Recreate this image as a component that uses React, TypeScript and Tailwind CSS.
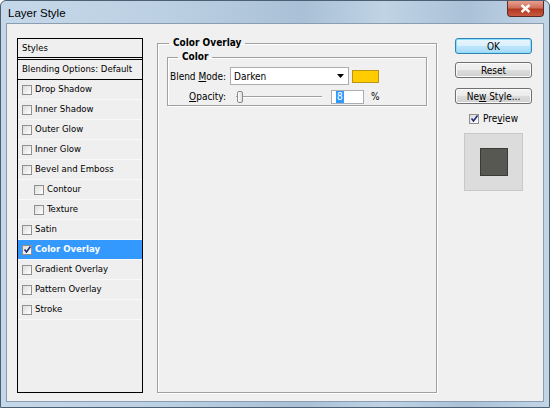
import React from 'react'

const font = { fontFamily: '"DejaVu Sans Condensed", "DejaVu Sans", sans-serif', fontStretch: 'condensed' }

function Check({ checked = false }: { checked?: boolean }) {
  return (
    <span className="relative flex h-[10px] w-[10px] shrink-0 items-center justify-center border border-[#8f8f8f] bg-gradient-to-br from-[#dcdcdc] to-[#ffffff]">
      {checked && (
        <svg width="9" height="9" viewBox="0 0 9 9" className="absolute">
          <path d="M1.5 4.5 L3.5 7 L7.5 1.5" fill="none" stroke="#1e2a78" strokeWidth="1.6" />
        </svg>
      )}
    </span>
  )
}

interface Row {
  label: string
  indent?: boolean
  checked?: boolean
  selected?: boolean
}

const rows: Row[] = [
  { label: 'Drop Shadow' },
  { label: 'Inner Shadow' },
  { label: 'Outer Glow' },
  { label: 'Inner Glow' },
  { label: 'Bevel and Emboss' },
  { label: 'Contour', indent: true },
  { label: 'Texture', indent: true },
  { label: 'Satin' },
  { label: 'Color Overlay', checked: true, selected: true },
  { label: 'Gradient Overlay' },
  { label: 'Pattern Overlay' },
  { label: 'Stroke' },
]

function Button({ children, primary = false }: { children: React.ReactNode; primary?: boolean }) {
  return (
    <button
      className={`flex h-[16px] w-[77px] items-center justify-center rounded-[3px] border text-[10px] text-black ${
        primary
          ? 'border-[#3c7fb1] bg-[linear-gradient(#eaf6fd_0%,#d9f0fc_50%,#bee6fd_51%,#a7d9f5_100%)] shadow-[inset_0_0_0_1px_#7fe1ff]'
          : 'border-[#707070] bg-[linear-gradient(#f2f2f2_0%,#ebebeb_50%,#dddddd_51%,#cfcfcf_100%)] shadow-[inset_0_0_0_1px_#fbfbfb]'
      }`}
    >
      {children}
    </button>
  )
}

export default function App() {
  return (
    <div
      className="flex h-[408px] w-[550px] flex-col overflow-hidden rounded-t-[6px] border border-[#4c5f73] bg-[linear-gradient(90deg,#c5d8ea_0%,#bcd0e3_30%,#a9c0d6_55%,#c0d3e5_70%,#aac1d7_85%,#c2d5e7_100%)]"
      style={font}
    >
      <div className="flex h-[22px] shrink-0 items-start justify-between pl-[7px]">
        <span className="pt-[4px] text-[11.5px] text-black" style={{ fontFamily: '"Liberation Sans", sans-serif', fontStretch: 'normal' }}>
          Layer Style
        </span>
        <div className="mr-[5px] flex h-[16px] w-[37px] items-center justify-center rounded-b-[4px] border border-t-0 border-[#5b2b24] bg-[linear-gradient(#e8a090_0%,#d0705c_45%,#b3381f_55%,#c85a42_100%)]">
          <svg width="11" height="9" viewBox="0 0 11 9">
            <path d="M1.5 1 L9.5 8 M9.5 1 L1.5 8" stroke="#ffffff" strokeWidth="2.4" />
          </svg>
        </div>
      </div>
      <div className="mx-[5px] mb-[5px] flex flex-1 border border-[#8a9db1] bg-[#f0f0f0] pt-[14px] pr-[10px] pb-[8px] pl-[10px]">
        {/* styles list */}
        <div className="flex w-[126px] flex-col border border-black bg-[#efefef] text-[9.5px] text-black">
          <div className="flex h-[19px] items-center border-b border-black pl-[4px]">Styles</div>
          <div className="mt-[1px] flex h-[21px] items-center border-y border-black pl-[4px]">Blending Options: Default</div>
          {rows.map((r) => (
            <div
              key={r.label}
              className={`flex h-[20px] items-center gap-[3px] border-b border-[#f9f9f9] ${
                r.indent ? 'pl-[16px]' : 'pl-[4px]'
              } ${r.selected ? 'bg-[#3399ff] font-bold text-white' : ''}`}
            >
              <Check checked={r.checked} />
              <span>{r.label}</span>
            </div>
          ))}
        </div>

        {/* options */}
        <fieldset className="ml-[14px] w-[280px] border border-[#a0a0a0] px-[9px] shadow-[inset_1px_1px_0_#ffffff,1px_1px_0_#ffffff]">
          <legend className="ml-[2px] px-[4px] text-[10px] leading-[10px] font-bold text-black">Color Overlay</legend>
          <fieldset className="mt-[4px] h-[54px] border border-[#a0a0a0] shadow-[inset_1px_1px_0_#ffffff,1px_1px_0_#ffffff]">
            <legend className="ml-[10px] px-[4px] text-[10px] leading-[10px] font-bold text-black">Color</legend>
            <div className="mt-[5px] flex items-center text-[10px] text-black">
              <span className="w-[58px] text-right">
                Blend <u>M</u>ode:
              </span>
              <div className="ml-[4px] flex h-[18px] w-[119px] items-center justify-between border border-[#abadb3] bg-white pr-[4px] pl-[3px]">
                <span>Darken</span>
                <svg width="7" height="4" viewBox="0 0 7 4">
                  <path d="M0 0 H7 L3.5 4 Z" fill="#000000" />
                </svg>
              </div>
              <div className="ml-[3px] h-[13px] w-[27px] border border-[#b8951a] bg-[#ffcc00]" />
            </div>
            <div className="mt-[4px] flex items-center text-[10px] text-black">
              <span className="w-[58px] text-right">
                <u>O</u>pacity:
              </span>
              <div className="relative ml-[10px] flex h-[14px] w-[86px] items-center">
                <div className="h-[2px] w-full border-t border-[#a0a0a0] bg-white" />
                <div className="absolute left-[1px] top-[1px] h-[12px] w-[6px] rounded-[2px] border border-[#8a8a8a] bg-[linear-gradient(90deg,#ffffff,#dcdcdc)]" />
              </div>
              <div className="ml-[9px] flex h-[14px] w-[33px] items-center border border-[#abadb3] bg-white pl-[4px]">
                <span className="bg-[#3399ff] px-[1px] leading-[12px] text-white">8</span>
              </div>
              <span className="ml-[7px]">%</span>
            </div>
          </fieldset>
        </fieldset>

        {/* buttons */}
        <div className="ml-[18px] flex flex-col items-center">
          <Button primary>OK</Button>
          <div className="h-[8px]" />
          <Button>Reset</Button>
          <div className="h-[10px]" />
          <Button>
            Ne<u>w</u>&nbsp;Style...
          </Button>
          <div className="mt-[7px] flex items-center gap-[4px] text-[10px] text-black">
            <Check checked />
            <span>
              Pre<u>v</u>iew
            </span>
          </div>
          <div className="mt-[7px] flex h-[58px] w-[59px] items-center justify-center border border-[#c8c8c8] bg-[#dcdcdc]">
            <div className="h-[28px] w-[28px] border border-[#3a3a36] bg-[#585853]" />
          </div>
        </div>
      </div>
    </div>
  )
}
